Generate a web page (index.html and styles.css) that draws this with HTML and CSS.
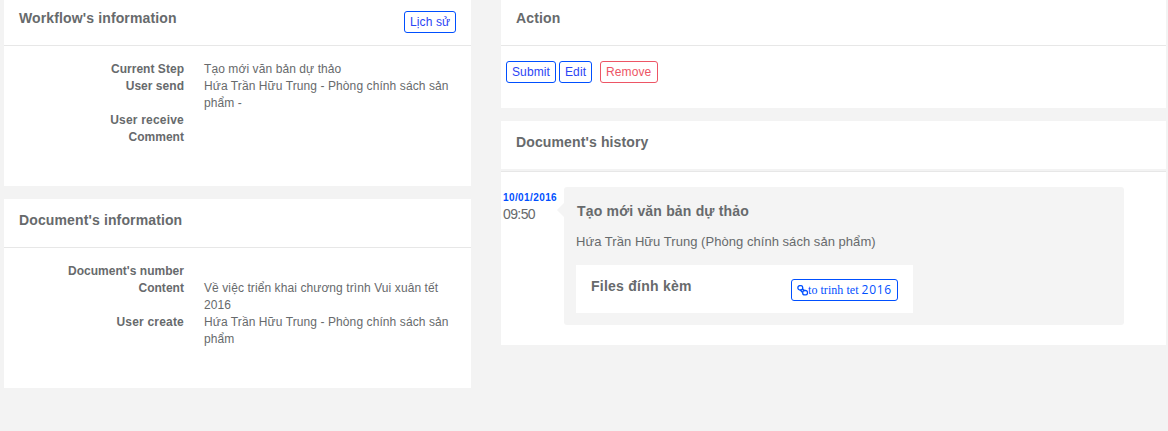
FILE: index.html
```html
<!DOCTYPE html>
<html lang="vi">
<head>
<meta charset="utf-8">
<title>Document workflow</title>
<link rel="stylesheet" href="styles.css">
</head>
<body>
<main class="page">
  <div class="column">
    <section class="panel workflow">
      <header class="panel-head"><h5>Workflow's information</h5><a class="btn history-btn">Lịch sử</a></header>
      <dl class="details">
        <dt>Current Step</dt><dd>Tạo mới văn bản dự thảo</dd>
        <dt>User send</dt><dd>Hứa Trần Hữu Trung - Phòng chính sách sản<br>phẩm -</dd>
        <dt class="wide">User receive</dt><dd></dd>
        <dt>Comment</dt><dd></dd>
      </dl>
    </section>
    <section class="panel document">
      <header class="panel-head tall"><h5>Document's information</h5></header>
      <dl class="details">
        <dt>Document's number</dt><dd></dd>
        <dt>Content</dt><dd>Về việc triển khai chương trình Vui xuân tết<br>2016</dd>
        <dt class="wide">User create</dt><dd>Hứa Trần Hữu Trung - Phòng chính sách sản<br>phẩm</dd>
      </dl>
    </section>
  </div>
  <div class="column">
    <section class="panel action">
      <header class="panel-head"><h5>Action</h5></header>
      <div class="actions"><a class="btn submit">Submit</a><a class="btn edit">Edit</a><a class="btn danger">Remove</a></div>
    </section>
    <section class="panel history">
      <header class="panel-head tall"><h5>Document's history</h5></header>
      <div class="timeline">
        <div class="when"><strong>10/01/2016</strong><span>09:50</span></div>
        <article class="entry">
          <h5 class="entry-title">Tạo mới văn bản dự thảo</h5>
          <p>Hứa Trần Hữu Trung (Phòng chính sách sản phẩm)</p>
          <div class="files">
            <h5 class="files-title">Files đính kèm</h5>
            <a class="btn file"><svg class="link-icon" viewBox="0 0 11 11" fill="none" stroke="currentColor" stroke-width="1.3"><rect x=".9" y=".6" width="4.8" height="4.4" rx="2"/><rect x="5.7" y="5.5" width="4.8" height="4.4" rx="2"/><path d="M3.3 5l2 2.3M5.3 3.8l2.3 2"/></svg><span>to trinh tet</span><span class="year">2016</span></a>
          </div>
        </article>
      </div>
    </section>
  </div>
</main>
</body>
</html>
```
FILE: styles.css
```css
* { box-sizing: border-box; }
body {
  margin: 0;
  background: #f3f3f3;
  color: #676a6c;
  font: 12px/17px "Liberation Sans", Arial, sans-serif;
}
h5, p, dl, dd { margin: 0; }
h5 { font-size: 14px; line-height: 16px; letter-spacing: .13px; white-space: nowrap; }
.page { display: grid; grid-template-columns: 467px 665px; gap: 30px; height: 431px; padding-left: 4px; }
.column { display: flex; flex-direction: column; gap: 13px; }
.panel { background: #fff; }
.workflow { height: 186px; }
.document { height: 189px; }
.action { height: 108px; }
.history { height: 224px; }
.panel-head {
  display: flex;
  justify-content: space-between;
  align-items: flex-start;
  height: 46px;
  padding: 10px 15px 0;
  border-bottom: 1px solid #e7e7e7;
}
.panel-head.tall { height: 49px; padding-top: 13px; }
.history .panel-head { height: 51px; box-shadow: inset 0 -2px #f3f3f3; }
.btn {
  display: inline-flex;
  align-items: center;
  height: 22px;
  padding: 0 5px;
  border: 1px solid #004fff;
  border-radius: 3px;
  color: #2b45f5;
  background: #fff;
  letter-spacing: .12px;
  line-height: 18px;
  white-space: nowrap;
}
.history-btn { width: 52px; margin-top: 1px; }
.details {
  display: grid;
  grid-template-columns: 180px 250px;
  column-gap: 20px;
  grid-auto-rows: minmax(17px, auto);
  padding-top: 15px;
}
dt { font-weight: 700; text-align: right; letter-spacing: .03px; }
dt.wide { letter-spacing: .2px; }
dd { letter-spacing: .09px; white-space: nowrap; }
.actions { display: flex; padding: 15px 5px; }
.submit { width: 50px; margin-right: 3px; }
.edit { width: 33px; margin-right: 8px; }
.btn.danger { width: 58px; border-color: #ed5565; color: #ed5565; }
.timeline { display: grid; grid-template-columns: 61px 560px; padding: 15px 0 0 2px; }
.when { display: flex; flex-direction: column; padding-top: 2px; }
.when strong { color: #004fff; font-size: 10px; letter-spacing: .4px; }
.when span { font-size: 14px; letter-spacing: -.6px; }
.entry { position: relative; height: 138px; padding: 16px 12px 0; border-radius: 3px; background: #f4f4f4; }
.entry::before {
  content: "";
  position: absolute;
  left: -7px;
  top: 16px;
  border: solid transparent;
  border-width: 7px 7px 7px 0;
  border-right-color: #f4f4f4;
}
.entry-title { padding-left: 1px; letter-spacing: .18px; }
.entry p { margin: 14px 0 15px; font-size: 13px; letter-spacing: .04px; }
.files { display: flex; justify-content: space-between; width: 337px; height: 48px; padding: 13px 15px; background: #fff; }
.files-title { letter-spacing: .25px; }
.file { width: 107px; margin-top: 1px; font-family: "Liberation Serif", serif; color: #004fff; }
.link-icon { width: 11px; height: 11px; flex: none; }
.link-icon + span { letter-spacing: .05px; }
.year { margin-left: 3px; font-family: "Open Sans", sans-serif; letter-spacing: .7px; }
```
